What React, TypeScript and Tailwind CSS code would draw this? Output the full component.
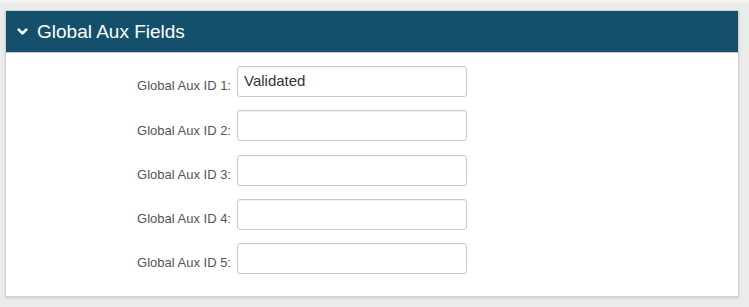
import { ChevronDown } from "lucide-react"

const fields = [
  { label: "Global Aux ID 1:", value: "Validated" },
  { label: "Global Aux ID 2:", value: "" },
  { label: "Global Aux ID 3:", value: "" },
  { label: "Global Aux ID 4:", value: "" },
  { label: "Global Aux ID 5:", value: "" },
]

export default function App() {
  return (
    <div className="h-[307px] w-[749px] bg-[#ebebeb] pt-[10px] pl-[5px] font-['Liberation_Sans',Arial,sans-serif]">
      <div className="absolute left-0 top-0 h-[4px] w-[749px] bg-gradient-to-b from-[#f6f6f6] to-[#ebebeb]" />
      <div className="relative w-[734px] border border-[#d0d0d0] bg-white shadow-[0_1px_2px_rgba(0,0,0,0.15)]">
        <div className="flex h-[42px] items-center gap-[7px] border-b border-[#c9c9c9] bg-[#14506c] pl-[9px] text-white">
          <ChevronDown className="h-[15px] w-[15px]" strokeWidth={4.5} />
          <span className="text-[19px] leading-none">Global Aux Fields</span>
        </div>
        <div className="flex flex-col gap-[13.25px] pt-[13px] pb-[22px]">
          {fields.map((f) => (
            <div key={f.label} className="flex items-center">
              <label className="w-[231px] pr-[6px] pt-[9px] text-right text-[13px] text-[#555]">{f.label}</label>
              <input
                defaultValue={f.value}
                className="h-[31px] w-[230px] rounded-[3px] border border-[#cccccc] px-[6px] pb-[3px] text-[15px] text-[#333] outline-none shadow-[inset_0_1px_1px_rgba(0,0,0,0.06)]"
              />
            </div>
          ))}
        </div>
      </div>
    </div>
  )
}
